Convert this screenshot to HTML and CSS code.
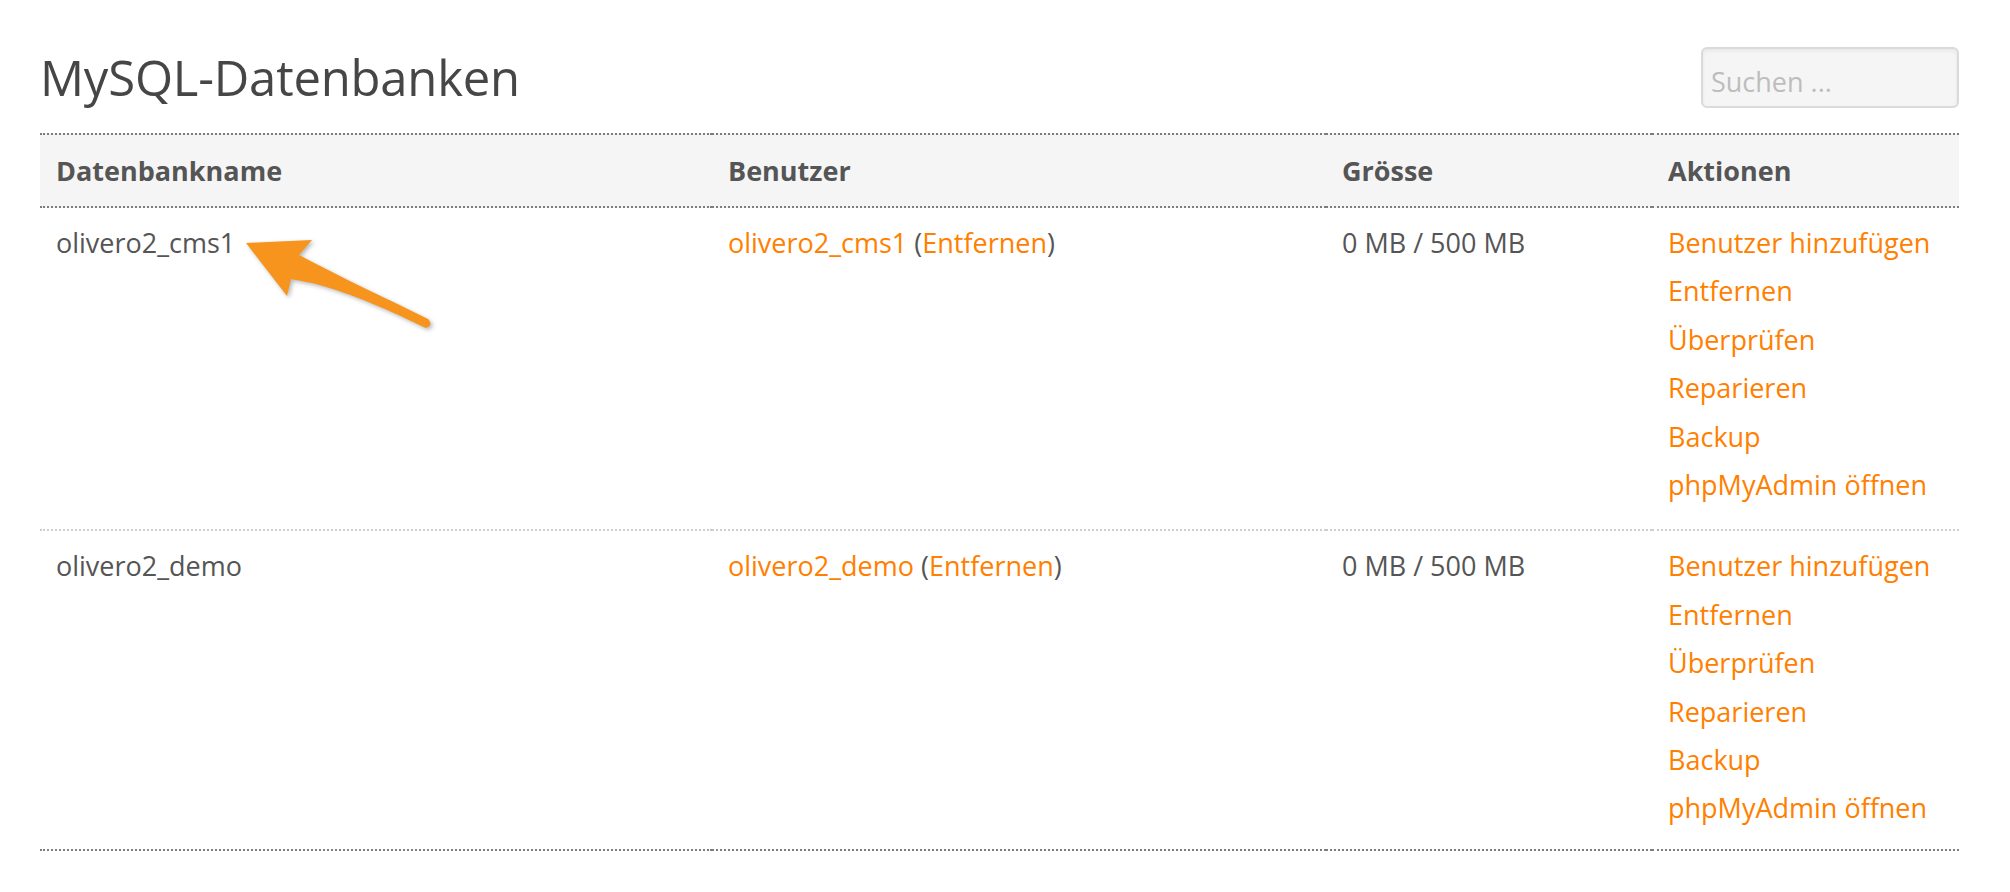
FILE: index.html
```html
<!DOCTYPE html>
<html lang="de">
<head>
<meta charset="utf-8">
<title>MySQL-Datenbanken</title>
<link rel="stylesheet" href="styles.css">
</head>
<body>
<div class="page">
  <div class="topbar">
    <h1 class="title">MySQL-Datenbanken</h1>
    <input class="search" type="text" placeholder="Suchen ...">
  </div>
  <table class="db-table">
    <colgroup>
      <col class="c-name">
      <col class="c-user">
      <col class="c-size">
      <col class="c-actions">
    </colgroup>
    <thead>
      <tr>
        <th>Datenbankname</th>
        <th>Benutzer</th>
        <th>Grösse</th>
        <th>Aktionen</th>
      </tr>
    </thead>
    <tbody>
      <tr>
        <td>olivero2_cms1</td>
        <td><a href="#">olivero2_cms1</a> (<a href="#">Entfernen</a>)</td>
        <td>0 MB / 500 MB</td>
        <td class="actions">
          <a href="#">Benutzer hinzufügen</a>
          <a href="#">Entfernen</a>
          <a href="#">Überprüfen</a>
          <a href="#">Reparieren</a>
          <a href="#">Backup</a>
          <a href="#">phpMyAdmin öffnen</a>
        </td>
      </tr>
      <tr class="last">
        <td>olivero2_demo</td>
        <td><a href="#">olivero2_demo</a> (<a href="#">Entfernen</a>)</td>
        <td>0 MB / 500 MB</td>
        <td class="actions">
          <a href="#">Benutzer hinzufügen</a>
          <a href="#">Entfernen</a>
          <a href="#">Überprüfen</a>
          <a href="#">Reparieren</a>
          <a href="#">Backup</a>
          <a href="#">phpMyAdmin öffnen</a>
        </td>
      </tr>
    </tbody>
  </table>
  <svg class="arrow" width="2010" height="892" viewBox="0 0 2010 892" aria-hidden="true">
    <path d="M246,243 L312,240 L299,255 C340,277 390,300 428,319 Q434,325 426,328 C395,313 352,293 312,283 Q297,280 291,279 L287,296 Z" fill="#f7941d"/>
  </svg>
</div>
</body>
</html>
```

FILE: styles.css
```css
html, body {
  margin: 0;
  padding: 0;
  background: #ffffff;
}

body {
  font-family: "Open Sans", "Noto Sans", "DejaVu Sans", sans-serif;
  color: #555555;
  font-size: 27px;
}

.page {
  position: relative;
  width: 1919px;
  padding: 44px 0 0 40px;
}

.topbar {
  display: flex;
  justify-content: space-between;
  align-items: flex-start;
  margin-bottom: 22px;
}

.title {
  margin: 0;
  font-size: 49px;
  font-weight: 400;
  line-height: 67px;
  color: #464646;
  letter-spacing: -0.2px;
}

.search {
  box-sizing: border-box;
  margin-top: 3px;
  width: 258px;
  height: 61px;
  padding: 8px 8px 0;
  border: 2px solid #dadada;
  border-radius: 6px;
  background: #f5f5f5;
  box-shadow: inset 0 2px 4px rgba(0, 0, 0, 0.06);
  font-family: "Open Sans", "Noto Sans", sans-serif;
  font-size: 27px;
  color: #555555;
  outline: none;
}

.search::placeholder {
  color: #bdbdbd;
}

.db-table {
  width: 1919px;
  table-layout: fixed;
  border-collapse: separate;
  border-spacing: 0;
}

.c-name { width: 672px; }
.c-user { width: 614px; }
.c-size { width: 326px; }
.c-actions { width: 307px; }

.db-table th {
  text-align: left;
  font-weight: 700;
  color: #555555;
  background: #f5f5f5;
  padding: 17px 16px;
  border-top: 2px dotted #7d7d7d;
  border-bottom: 2px dotted #7d7d7d;
  line-height: normal;
}

.db-table td {
  vertical-align: top;
  padding: 11px 16px 20px;
  line-height: 48.4px;
  border-bottom: 2px dotted #cfcfcf;
  white-space: nowrap;
}

.db-table tr.last td {
  padding-bottom: 16px;
  border-bottom-color: #7d7d7d;
}

.db-table a {
  color: #ff8000;
  text-decoration: none;
}

.actions a {
  display: block;
}

.arrow {
  position: absolute;
  left: 0;
  top: 0;
  pointer-events: none;
  filter: drop-shadow(2px 2px 2px rgba(0, 0, 0, 0.28));
}
```
